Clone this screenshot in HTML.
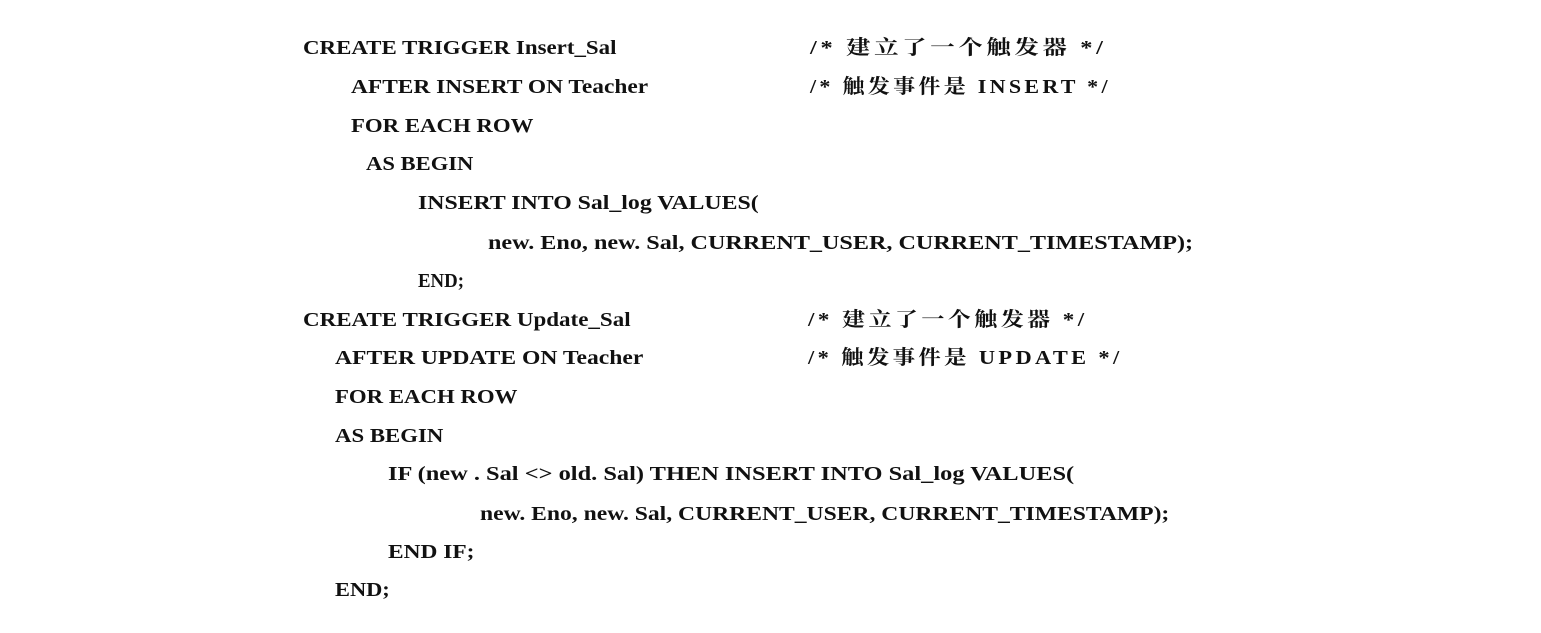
<!DOCTYPE html>
<html><head><meta charset="utf-8"><style>
body{margin:0;width:1541px;height:633px;background:#fff;overflow:hidden;position:relative}
.l{position:absolute;font-family:"Liberation Serif","Noto Serif CJK SC",serif;font-size:20px;color:#111;white-space:pre;line-height:20px;transform-origin:0 50%;font-weight:bold}
.c{letter-spacing:3px}
</style></head><body>
<div class="l" style="left:303px;top:38px;transform:scaleX(1.145)">CREATE TRIGGER Insert_Sal</div>
<div class="l c" style="left:810px;top:38px;transform:scaleX(1.22)">/* 建立了一个触发器 */</div>
<div class="l" style="left:351px;top:77px;transform:scaleX(1.17)">AFTER INSERT ON Teacher</div>
<div class="l c" style="left:810px;top:77px;transform:scaleX(1.1)">/* 触发事件是 INSERT */</div>
<div class="l" style="left:351px;top:116px;transform:scaleX(1.14)">FOR EACH ROW</div>
<div class="l" style="left:366px;top:154px;transform:scaleX(1.13)">AS BEGIN</div>
<div class="l" style="left:418px;top:193px;transform:scaleX(1.19)">INSERT INTO Sal_log VALUES(</div>
<div class="l" style="left:488px;top:233px;transform:scaleX(1.207)">new. Eno, new. Sal, CURRENT_USER, CURRENT_TIMESTAMP);</div>
<div class="l" style="left:418px;top:271px;transform:scaleX(.94)">END;</div>
<div class="l" style="left:303px;top:310px;transform:scaleX(1.15)">CREATE TRIGGER Update_Sal</div>
<div class="l c" style="left:808px;top:310px;transform:scaleX(1.15)">/* 建立了一个触发器 */</div>
<div class="l" style="left:335px;top:348px;transform:scaleX(1.18)">AFTER UPDATE ON Teacher</div>
<div class="l c" style="left:808px;top:348px;transform:scaleX(1.12)">/* 触发事件是 UPDATE */</div>
<div class="l" style="left:335px;top:387px;transform:scaleX(1.14)">FOR EACH ROW</div>
<div class="l" style="left:335px;top:426px;transform:scaleX(1.14)">AS BEGIN</div>
<div class="l" style="left:388px;top:464px;transform:scaleX(1.22)">IF (new . Sal &lt;&gt; old. Sal) THEN INSERT INTO Sal_log VALUES(</div>
<div class="l" style="left:480px;top:504px;transform:scaleX(1.18)">new. Eno, new. Sal, CURRENT_USER, CURRENT_TIMESTAMP);</div>
<div class="l" style="left:388px;top:542px;transform:scaleX(1.17)">END IF;</div>
<div class="l" style="left:335px;top:580px;transform:scaleX(1.12)">END;</div>
</body></html>
